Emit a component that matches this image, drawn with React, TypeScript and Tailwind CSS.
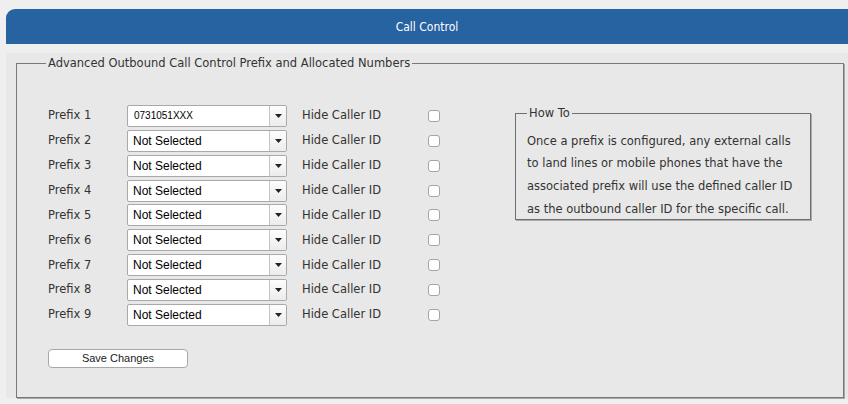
export default function App() {
  const prefixes = [
    "0731051XXX",
    "Not Selected",
    "Not Selected",
    "Not Selected",
    "Not Selected",
    "Not Selected",
    "Not Selected",
    "Not Selected",
    "Not Selected",
  ];

  return (
    <div className="w-[848px] h-[404px] overflow-hidden bg-[#efefef] pt-[9px] text-[#333] font-['DejaVu_Sans',sans-serif]">
      {/* Top bar */}
      <div className="ml-[6px] h-[35px] rounded-tl-[9px] bg-[#2762a1] flex items-center justify-center">
        <span className="text-white text-[12px] font-['DejaVu_Sans_Condensed','DejaVu_Sans',sans-serif]">
          Call Control
        </span>
      </div>

      {/* Panel */}
      <div className="mt-[9px] ml-[6px] h-[345px] bg-[#e8e8e8] pl-[10px] pr-[4px] pt-[3px]">
        <fieldset className="h-[342px] border border-[#787878] shadow-[1px_1px_0_#a8a8a8] pl-[29px]">
          <legend className="px-[2px] text-[11.5px] leading-[15px]">
            Advanced Outbound Call Control Prefix and Allocated Numbers
          </legend>

          <div className="flex mt-[32.5px] ml-[2px]">
            {/* Prefix rows */}
            <div className="flex flex-col">
              {prefixes.map((val, i) => (
                <div key={i} className="flex items-center h-[24.875px]">
                  <span className="w-[79px] text-[11.5px]">Prefix {i + 1}</span>
                  <div className="w-[160px] h-[22px] bg-white border border-[#a9a9a9] rounded-[2px] flex items-center">
                    <span
                      className={
                        i === 0
                          ? "flex-1 pl-[6px] text-[10px] text-black font-['Liberation_Sans',Arial,sans-serif]"
                          : "flex-1 pl-[5px] text-[12px] text-black font-['Liberation_Sans',Arial,sans-serif]"
                      }
                    >
                      {val}
                    </span>
                    <div className="w-[17px] h-full border-l border-[#c4c4c4] bg-gradient-to-b from-[#fdfdfd] to-[#ececec] flex items-center justify-center rounded-r-[2px]">
                      <svg width="7" height="4" viewBox="0 0 7 4">
                        <path d="M0 0h7L3.5 4z" fill="#222" />
                      </svg>
                    </div>
                  </div>
                  <span className="ml-[15px] w-[126px] text-[11.5px]">Hide Caller ID</span>
                  <span className="w-[12px] h-[12px] bg-white border border-[#a5a5a5] rounded-[3px]" />
                </div>
              ))}

              <button className="mt-[22px] w-[140px] h-[19px] bg-white border border-[#a8a8a8] rounded-[4px] text-[11px] text-[#222] font-['Liberation_Sans',Arial,sans-serif] leading-none">
                Save Changes
              </button>
            </div>

            {/* How To */}
            <fieldset className="ml-[75px] mt-[2px] self-start w-[296px] border border-[#6f6f6f] shadow-[1px_1px_0_#aaa] pl-[11px] pr-[12px]">
              <legend className="px-[2px] text-[11.5px] leading-[15px]">How To</legend>
              <p className="text-[11.5px] leading-[22.7px] mt-[9px] mb-[-1px]">
                Once a prefix is configured, any external calls to land lines or mobile phones that have the
                associated prefix will use the defined caller ID as the outbound caller ID for the specific call.
              </p>
            </fieldset>
          </div>
        </fieldset>
      </div>
    </div>
  );
}
